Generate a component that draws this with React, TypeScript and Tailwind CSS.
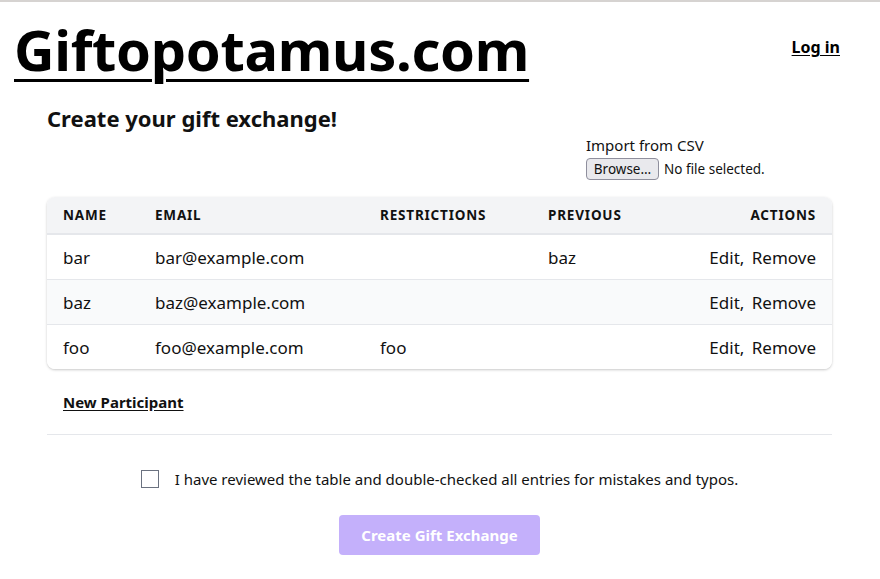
import React from "react";

const rows = [
  { name: "bar", email: "bar@example.com", restrictions: "", previous: "baz" },
  { name: "baz", email: "baz@example.com", restrictions: "", previous: "" },
  { name: "foo", email: "foo@example.com", restrictions: "foo", previous: "" },
];

export default function App() {
  return (
    <div
      className="min-h-[579px] bg-white text-[#111] border-t-2 border-[#d6d3d1]"
      style={{ fontFamily: '"Noto Sans", "Open Sans", sans-serif' }}
    >
      <header className="flex items-start justify-between pl-[14px] pr-10 pt-[14px]">
        <a className="text-[56px] leading-[66px] font-bold underline decoration-[3px] underline-offset-[8px] tracking-[-0.3px] text-black">
          Giftopotamus.com
        </a>
        <a className="mt-[19px] text-[16px] font-bold underline underline-offset-2 text-black">Log in</a>
      </header>

      <main className="w-[785px] ml-[47px]">
        <h1 className="mt-[21px] text-[22px] leading-[30px] font-bold text-[#111]">Create your gift exchange!</h1>

        <div className="flex mt-[1px] pl-[539px]">
          <div className="whitespace-nowrap">
            <div className="text-[15px] leading-[22px]">Import from CSV</div>
            <div className="flex items-center gap-[5px] mt-[2px]">
              <button className="h-[22px] w-[73px] text-[13.5px] leading-[20px] bg-[#e9e9ed] border border-[#8f8f9d] rounded-[4px] text-[#111]">
                Browse…
              </button>
              <span className="text-[13.5px]">No file selected.</span>
            </div>
          </div>
        </div>

        <div className="mt-[17px] rounded-lg overflow-hidden shadow-[0_1px_3px_rgba(0,0,0,0.15),0_1px_2px_rgba(0,0,0,0.08)]">
          <table className="w-full table-fixed border-collapse text-left">
            <colgroup>
              <col className="w-[108px]" />
              <col className="w-[225px]" />
              <col className="w-[168px]" />
              <col className="w-[120px]" />
              <col />
            </colgroup>
            <thead>
              <tr className="bg-[#f3f4f6] border-b-2 border-[#e5e7eb]">
                <th className="h-[37px] pl-4 text-[13.5px] font-bold tracking-[0.06em]">NAME</th>
                <th className="text-[13.5px] font-bold tracking-[0.06em]">EMAIL</th>
                <th className="text-[13.5px] font-bold tracking-[0.06em]">RESTRICTIONS</th>
                <th className="text-[13.5px] font-bold tracking-[0.06em]">PREVIOUS</th>
                <th className="pr-4 text-right text-[13.5px] font-bold tracking-[0.06em]">ACTIONS</th>
              </tr>
            </thead>
            <tbody>
              {rows.map((r, i) => (
                <tr
                  key={r.name}
                  className={`${i === 1 ? "bg-[#f9fafb]" : "bg-white"} ${i < 2 ? "border-b border-[#e5e7eb]" : ""}`}
                >
                  <td className="h-[45px] pl-4 pt-[2px] text-[17px]">{r.name}</td>
                  <td className="pt-[2px] text-[17px]">{r.email}</td>
                  <td className="pt-[2px] text-[17px]">{r.restrictions}</td>
                  <td className="pt-[2px] text-[17px]">{r.previous}</td>
                  <td className="pr-4 pt-[2px] text-right text-[17px] whitespace-nowrap">
                    <a>Edit</a>,{" "}<a className="ml-[3px]">Remove</a>
                  </td>
                </tr>
              ))}
            </tbody>
          </table>
        </div>

        <div className="pl-4 pt-[21px] pb-[20px] border-b border-[#e5e7eb]">
          <a className="text-[15px] leading-[24px] font-bold underline underline-offset-2">New Participant</a>
        </div>

        <label className="mt-[32px] flex items-center justify-center gap-[16px]">
          <span className="w-[18px] h-[18px] border border-[#6b7280] bg-white" />
          <span className="text-[15px] leading-[24px]">I have reviewed the table and double-checked all entries for mistakes and typos.</span>
        </label>

        <div className="mt-[24px] flex justify-center">
          <button className="w-[201px] h-[40px] rounded-[4px] bg-[#c4b0fb] text-white font-bold text-[15px]">
            Create Gift Exchange
          </button>
        </div>
      </main>
    </div>
  );
}
